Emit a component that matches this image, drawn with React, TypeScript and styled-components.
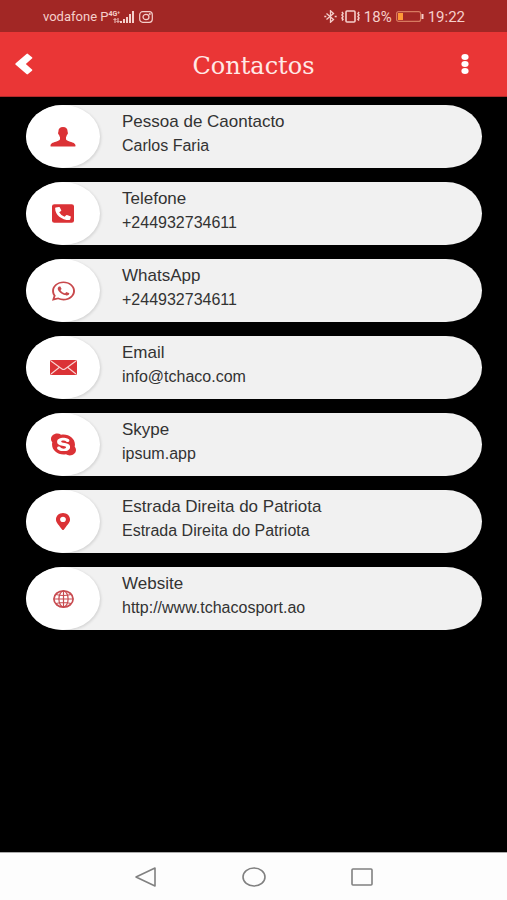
import React from "react";
import styled, { createGlobalStyle } from "styled-components";
import { FaMapMarkerAlt, FaPhoneSquareAlt, FaSkype, FaWhatsapp } from "react-icons/fa";

const GlobalStyle = createGlobalStyle`
  *, *::before, *::after { box-sizing: border-box; }
  body { margin: 0; background: #000; }
`;

const Screen = styled.div`
  display: flex;
  flex-direction: column;
  min-height: 100vh;
  background: #000;
  font-family: "Liberation Sans", Arial, sans-serif;
`;

const StatusBar = styled.div`
  display: flex;
  justify-content: space-between;
  align-items: center;
  height: 32px;
  padding: 1px 42px 0 43px;
  background: #a22725;
  color: #f5cfcb;
  font-family: Roboto, sans-serif;
`;

const StatusGroup = styled.div<{ $gap: number }>`
  display: flex;
  align-items: center;
  gap: ${({ $gap }) => $gap}px;
  svg { display: block; flex: none; }
`;

const Carrier = styled.span`
  font-size: 13px;
  line-height: 16px;
`;

const StatusText = styled.span`
  font-size: 15px;
  line-height: 18px;
`;

const SignalStack = styled.span`
  display: flex;
  align-items: flex-end;
`;

const NetworkType = styled.span`
  display: flex;
  flex-direction: column;
  align-items: flex-end;
  font-size: 7px;
  line-height: 7px;
  font-weight: 700;
`;

const Header = styled.header`
  display: grid;
  grid-template-columns: 1fr auto 1fr;
  align-items: center;
  height: 65px;
  padding: 0 22px 0 4px;
  background: #ea3636;
  border-bottom: 1px solid #b02a2a;
  color: #fff;
`;

const Title = styled.h1`
  margin: 0 0 0 18px;
  padding-top: 3px;
  font: 400 24px/32px "DejaVu Serif", serif;
  color: #ffe9e6;
`;

const IconButton = styled.button<{ $end?: boolean }>`
  display: grid;
  place-items: center;
  justify-self: ${({ $end }) => ($end ? "end" : "start")};
  width: 40px;
  height: 48px;
  padding: 0;
  border: 0;
  background: none;
  color: inherit;
  cursor: pointer;
`;

const List = styled.ul`
  display: flex;
  flex: 1;
  flex-direction: column;
  gap: 14px;
  margin: 0;
  padding: 8px 25px 14px 26px;
  list-style: none;
`;

const Card = styled.li`
  display: flex;
  align-items: center;
  gap: 22px;
  height: 63px;
  border-radius: 36px / 50%;
  background: #f1f1f1;
  overflow: hidden;
`;

const IconDisc = styled.div`
  display: grid;
  place-items: center;
  flex: none;
  width: 74px;
  height: 63px;
  border-radius: 50%;
  background: #fff;
  box-shadow: 1px 1px 3px #0002;
  color: #db3236;
`;

const Glyph = styled.span<{ $width: number; $height: number; $color?: string }>`
  display: block;
  width: ${({ $width }) => $width}px;
  height: ${({ $height }) => $height}px;
  color: ${({ $color }) => $color ?? "inherit"};
  svg { display: block; width: 100%; height: 100%; }
`;

const Details = styled.div`
  min-width: 0;
  padding-bottom: 6px;
  color: #333;
`;

const Label = styled.div`
  font-size: 17px;
  line-height: 24px;
`;

const Value = styled.div`
  font-size: 16px;
  line-height: 24px;
`;

const NavBar = styled.nav`
  display: flex;
  justify-content: center;
  gap: 60px;
  height: 48px;
  background: #fdfdfd;
  border-top: 1px solid #aaa;
  color: #808080;
`;

const NavButton = styled.button`
  display: grid;
  place-items: center;
  width: 48px;
  padding: 0;
  border: 0;
  background: none;
  color: inherit;
  cursor: pointer;
`;

const PersonIcon = () => (
  <svg width="26" height="20" viewBox="0 0 26 20" fill="currentColor" aria-hidden="true">
    <path d="M13 0C9.900 0 8.400 1.800 8.400 4.400c0 .8-.5 1.200-.3 2 .2.900.8 1 1 1.600.3 1 .5 1.700.9 2.200v1.900c0 1-1.300 1.500-2.900 2.100C3.900 15.300.8 15.900.5 18.400c0 .6.100 1.100.5 1.100h24c.4 0 .5-.5.500-1.100-.3-2.500-3.400-3.100-6.600-4.200-1.600-.6-2.900-1.100-2.900-2.100v-1.900c.4-.5.6-1.200.9-2.200.2-.6.8-.7 1-1.600.2-.8-.3-1.200-.3-2C17.600 1.800 16.100 0 13 0Z" />
  </svg>
);

const EnvelopeIcon = () => (
  <svg width="27" height="15" viewBox="0 0 27 15" aria-hidden="true">
    <rect width="27" height="15" rx="1.500" fill="currentColor" />
    <path d="m1 1 11 8q1.500 1.100 3 0L26 1M1 14l8.500-6.700M26 14l-8.500-6.700" fill="none" stroke="#f8d4d2" strokeWidth="1.100" />
  </svg>
);

const GlobeIcon = () => (
  <svg width="21" height="18" viewBox="0 0 21 18" fill="none" stroke="#c84b50" aria-hidden="true">
    <ellipse cx="10.500" cy="9" rx="9.600" ry="8.100" strokeWidth="1.700" />
    <ellipse cx="10.500" cy="9" rx="4.600" ry="8" strokeWidth="1.200" />
    <path d="M10.500 1v16M1 9h19M3 4.500q7.500 2 15 0M3 13.500q7.500-2 15 0" strokeWidth="1.200" />
  </svg>
);

const contacts = [
  { label: "Pessoa de Caontacto", value: "Carlos Faria", icon: <PersonIcon /> },
  {
    label: "Telefone",
    value: "+244932734611",
    icon: <Glyph $width={22} $height={21}><FaPhoneSquareAlt preserveAspectRatio="none" /></Glyph>,
  },
  {
    label: "WhatsApp",
    value: "+244932734611",
    icon: <Glyph $width={23} $height={22} $color="#c8494c"><FaWhatsapp preserveAspectRatio="none" /></Glyph>,
  },
  { label: "Email", value: "info@tchaco.com", icon: <EnvelopeIcon /> },
  {
    label: "Skype",
    value: "ipsum.app",
    icon: <Glyph $width={25} $height={25}><FaSkype preserveAspectRatio="none" /></Glyph>,
  },
  {
    label: "Estrada Direita do Patriota",
    value: "Estrada Direita do Patriota",
    icon: <Glyph $width={14} $height={17}><FaMapMarkerAlt preserveAspectRatio="none" /></Glyph>,
  },
  { label: "Website", value: "http://www.tchacosport.ao", icon: <GlobeIcon /> },
];

export default function App() {
  return (
    <Screen>
      <GlobalStyle />
      <StatusBar>
        <StatusGroup $gap={5}>
          <StatusGroup $gap={0}>
            <Carrier>vodafone P</Carrier>
            <SignalStack>
              <NetworkType>
                <span>4G⁺</span>
                <svg width="7" height="5" viewBox="0 0 7 5" fill="none" stroke="currentColor" aria-hidden="true">
                  <path d="M2 5V.8M.5 2 2 .5 3.500 2M5 0v4.200M3.500 3 5 4.500 6.500 3" />
                </svg>
              </NetworkType>
              <svg width="14" height="12" viewBox="0 0 14 12" fill="currentColor" aria-hidden="true">
                <path d="M0 10h2v2H0zM3 8h2v4H3zM6 6h2v6H6zM9 3h2v9H9zM12 0h2v12h-2z" />
              </svg>
            </SignalStack>
          </StatusGroup>
          <svg width="14" height="12" viewBox="0 0 14 12" fill="none" stroke="currentColor" strokeWidth="1.200" aria-hidden="true">
            <rect x=".7" y=".7" width="12.600" height="10.600" rx="3" />
            <ellipse cx="7" cy="6" rx="3" ry="2.600" />
            <circle cx="10.800" cy="3" r=".4" />
          </svg>
        </StatusGroup>
        <StatusGroup $gap={4}>
          <svg width="13" height="13" viewBox="0 0 13 13" fill="none" stroke="currentColor" strokeWidth="1.300" aria-hidden="true">
            <path d="m2.500 3.500 7 6-3 2.700V.8l3 2.700-7 6" />
            <path d="M.3 6.500h2M10.700 6.500h2" strokeWidth="1.500" />
          </svg>
          <svg width="19" height="13" viewBox="0 0 19 13" fill="none" stroke="currentColor" aria-hidden="true">
            <rect x="5" y="1" width="9" height="11" rx="1" strokeWidth="1.600" />
            <path d="m1 2 1 1.500-1 1.500 1 1.500-1 1.500 1 1.500-1 1M18 2l-1 1.500 1 1.500-1 1.500 1 1.500-1 1.500 1 1" strokeWidth="1.500" />
          </svg>
          <StatusText>18%</StatusText>
          <svg width="28" height="11" viewBox="0 0 28 11" aria-hidden="true">
            <rect x=".6" y=".6" width="24" height="9.800" rx="2" fill="none" stroke="#d77a60" strokeWidth="1.200" />
            <path d="M2 2h5v7H2z" fill="#ff9838" />
            <path d="M25.500 3h2v5h-2z" fill="currentColor" />
          </svg>
          <StatusText>19:22</StatusText>
        </StatusGroup>
      </StatusBar>
      <Header>
        <IconButton type="button" aria-label="Voltar">
          <svg width="18" height="22" viewBox="0 0 18 22" fill="currentColor" aria-hidden="true">
            <path d="M11.500.9q.8-.6 1.500 0l4 3.300q.7.700 0 1.400L10.800 11l6.200 5.400q.7.700 0 1.400l-4 3.300q-.7.600-1.500 0L.7 11.800q-.8-.8 0-1.600Z" />
          </svg>
        </IconButton>
        <Title>Contactos</Title>
        <IconButton type="button" $end aria-label="Mais opções">
          <svg width="8" height="20" viewBox="0 0 8 20" fill="currentColor" aria-hidden="true">
            <ellipse cx="4" cy="3" rx="3.600" ry="2.900" />
            <ellipse cx="4" cy="10" rx="3.600" ry="2.900" />
            <ellipse cx="4" cy="17" rx="3.600" ry="2.900" />
          </svg>
        </IconButton>
      </Header>
      <List>
        {contacts.map(({ label, value, icon }) => (
          <Card key={label}>
            <IconDisc>{icon}</IconDisc>
            <Details>
              <Label>{label}</Label>
              <Value>{value}</Value>
            </Details>
          </Card>
        ))}
      </List>
      <NavBar aria-label="Sistema">
        <NavButton type="button" aria-label="Voltar">
          <svg width="22" height="20" viewBox="0 0 22 20" fill="none" stroke="currentColor" strokeWidth="1.600" strokeLinejoin="round" aria-hidden="true">
            <path d="M20 1v18L1 10Z" />
          </svg>
        </NavButton>
        <NavButton type="button" aria-label="Início">
          <svg width="24" height="20" viewBox="0 0 24 20" fill="none" stroke="currentColor" strokeWidth="1.600" aria-hidden="true">
            <ellipse cx="12" cy="10" rx="11" ry="9" />
          </svg>
        </NavButton>
        <NavButton type="button" aria-label="Recentes">
          <svg width="22" height="18" viewBox="0 0 22 18" fill="none" stroke="currentColor" strokeWidth="1.600" aria-hidden="true">
            <rect x="1" y="1" width="20" height="16" rx="1" />
          </svg>
        </NavButton>
      </NavBar>
    </Screen>
  );
}
